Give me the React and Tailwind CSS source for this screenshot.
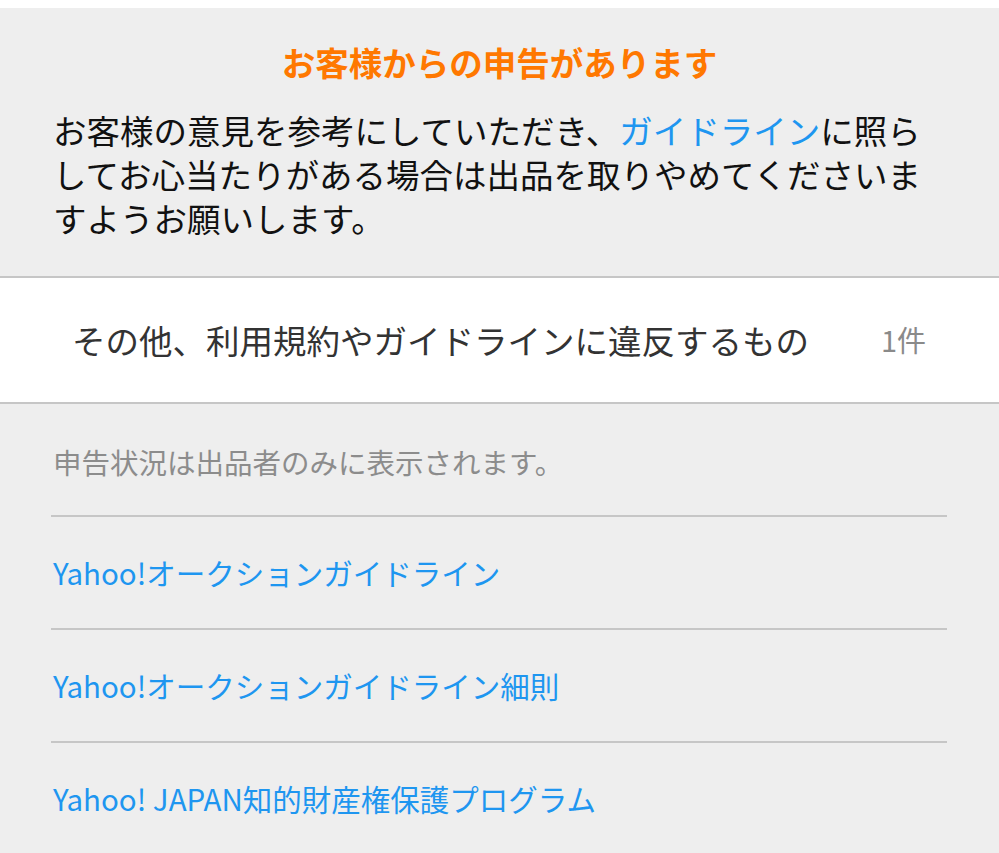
import React from 'react';

const links = [
    'Yahoo!オークションガイドライン',
    'Yahoo!オークションガイドライン細則',
    'Yahoo! JAPAN知的財産権保護プログラム',
];

const App = () => {
    return (
        <div
            className="min-h-screen bg-[#eeeeee]"
            style={{ fontFamily: '"Noto Sans CJK JP", "Noto Sans", sans-serif' }}
        >
            <div className="h-[8px] bg-white" />

            {/* Notice */}
            <div className="pl-[53px] pr-[60px] pt-[32px] pb-[36px]">
                <h2 className="text-center pl-[7px] text-[33.5px] leading-[44px] font-bold text-[#ff7800]">
                    お客様からの申告があります
                </h2>
                <p className="mt-[24px] text-[33.5px] leading-[44px] text-[#111111]">
                    お客様の意見を参考にしていただき、<span className="text-[#1e96f0]">ガイドライン</span>に照らしてお心当たりがある場合は出品を取りやめてくださいますようお願いします。
                </p>
            </div>

            {/* Report row */}
            <div className="flex items-center justify-between h-[128px] bg-white border-y-2 border-[#c6c6c6] pl-[72px] pr-[73px]">
                <span className="text-[33.5px] text-[#333333]">その他、利用規約やガイドラインに違反するもの</span>
                <span className="text-[29px] text-[#8a8a8a]">1件</span>
            </div>

            {/* Footer */}
            <div className="pl-[51px] pr-[52px]">
                <p className="pt-[38px] pb-[33px] pl-[2px] text-[28.5px] leading-[40px] text-[#8c8c8c]">
                    申告状況は出品者のみに表示されます。
                </p>
                {links.map((label) => (
                    <div key={label} className="border-t-2 border-[#c6c6c6]">
                        <a href="#" className="flex items-center h-[111px] pl-[2px] text-[29.5px] text-[#1e96f0]">
                            {label}
                        </a>
                    </div>
                ))}
            </div>
        </div>
    );
};

export default App;
